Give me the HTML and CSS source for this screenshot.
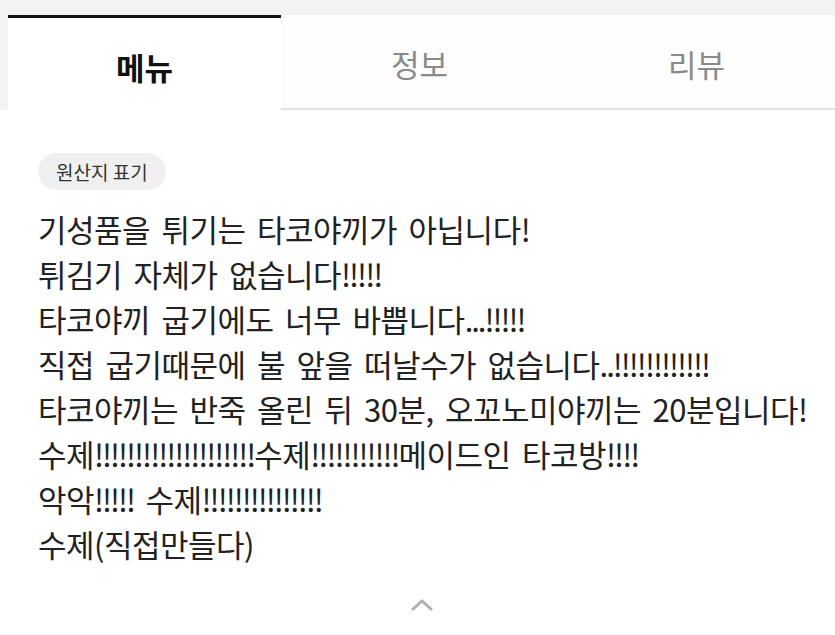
FILE: index.html
```html
<html>
<head>
	<meta charset="utf-8">
	<link rel="stylesheet" href="styles.css">
</head>
<body>
	<div class="top"></div>
	<div class="tabs">
		<div class="tab active">메뉴</div>
		<div class="tab">정보</div>
		<div class="tab">리뷰</div>
	</div>

	<div class="content">
		<span class="chip">원산지 표기</span>
		<div class="desc">
			<p>기성품을 튀기는 타코야끼가 아닙니다<span class="bang">!</span></p>
			<p>튀김기 자체가 없습니다<span class="bang">!!!!!</span></p>
			<p>타코야끼 굽기에도 너무 바쁩니다<span class="bang">...!!!!!</span></p>
			<p>직접 굽기때문에 불 앞을 떠날수가 없습니다<span class="bang">..!!!!!!!!!!!!</span></p>
			<p>타코야끼는 반죽 올린 뒤 30분, 오꼬노미야끼는 20분입니다<span class="bang">!</span></p>
			<p>수제<span class="bang">!!!!!!!!!!!!!!!!!!!!</span>수제<span class="bang">!!!!!!!!!!!</span>메이드인 타코방<span class="bang">!!!!</span></p>
			<p>악악<span class="bang">!!!!!</span> 수제<span class="bang">!!!!!!!!!!!!!!!</span></p>
			<p>수제(직접만들다)</p>
		</div>
		<div class="fold">
			<svg width="28" height="16" viewBox="0 0 28 16"><path d="M4 14 L14 5 L24 14" fill="none" stroke="#b0b0b0" stroke-width="3"/></svg>
		</div>
	</div>
</body>
</html>
```

FILE: styles.css
```css
body {
	font-family: "Noto Sans CJK KR", "Noto Sans", sans-serif;
	margin: 0px;
	background: #ffffff;
	color: #222222;
}
.top {
	height: 15px;
	background: #f3f3f3;
}
.tabs {
	display: flex;
	height: 95px;
	background: #f3f3f3;
	padding-left: 8px;
}
.tab {
	flex: 1;
	display: flex;
	align-items: center;
	justify-content: center;
	padding-top: 4px;
	font-size: 31px;
	color: #8a8a8a;
	background: #fdfdfd;
	border-bottom: solid 2px #e2e2e2;
	box-sizing: border-box;
}
.tab.active {
	flex: 0 0 273px;
	color: #111111;
	font-weight: bold;
	background: #ffffff;
	border-top: solid 3px #111111;
	border-bottom: none;
}
.content {
	padding: 43px 0px 0px 38px;
}
.chip {
	display: inline-block;
	background: #f0f0f0;
	color: #333333;
	font-size: 19px;
	line-height: 37px;
	padding: 0px 18px;
	border-radius: 19px;
}
.desc {
	margin-top: 16px;
	font-size: 31px;
	line-height: 45px;
	color: #222222;
	letter-spacing: -0.5px;
	word-spacing: 5px;
	white-space: nowrap;
}
.desc p {
	margin: 0px;
}
.bang {
	letter-spacing: -2px;
}
.fold {
	display: flex;
	justify-content: center;
	padding: 30px 30px 0px 0px;
}
```
